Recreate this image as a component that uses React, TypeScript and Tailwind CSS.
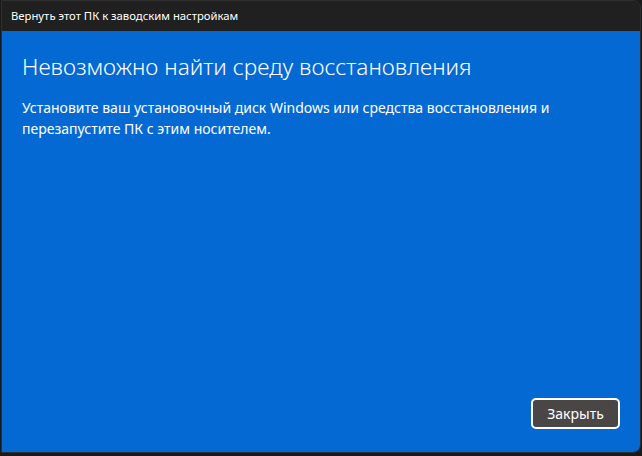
import React from 'react';

export default function App() {
  return (
    <div
      className="w-[642px] h-[456px] bg-[#1a1a1a] overflow-hidden"
      style={{ fontFamily: '"Noto Sans", "Open Sans", sans-serif' }}
    >
      <div className="w-[640px] h-[453px] flex flex-col rounded-tr-lg rounded-br-lg overflow-hidden border border-[#2e2e2e] bg-[#202020] ml-px">
        {/* Title bar */}
        <div className="h-[30px] flex items-center px-[9px] text-[11.3px] text-white bg-[#202020] shrink-0">
          Вернуть этот ПК к заводским настройкам
        </div>

        {/* Content */}
        <div className="flex-1 flex flex-col bg-[#0569d4] px-5 pb-[23px]">
          <h1 className="mt-[21px] text-[22.6px] leading-[30px] font-light text-white">
            Невозможно найти среду восстановления
          </h1>
          <p className="mt-[15px] text-[14px] leading-[21px] text-white w-[560px]">
            Установите ваш установочный диск Windows или средства восстановления и перезапустите ПК с этим носителем.
          </p>
          <div className="flex-1" />
          <div className="flex justify-end">
            <button className="w-[89px] h-[31px] rounded-[5px] border-2 border-white bg-[#4b4646] text-white text-[14px] leading-none">
              Закрыть
            </button>
          </div>
        </div>
      </div>
    </div>
  );
}
